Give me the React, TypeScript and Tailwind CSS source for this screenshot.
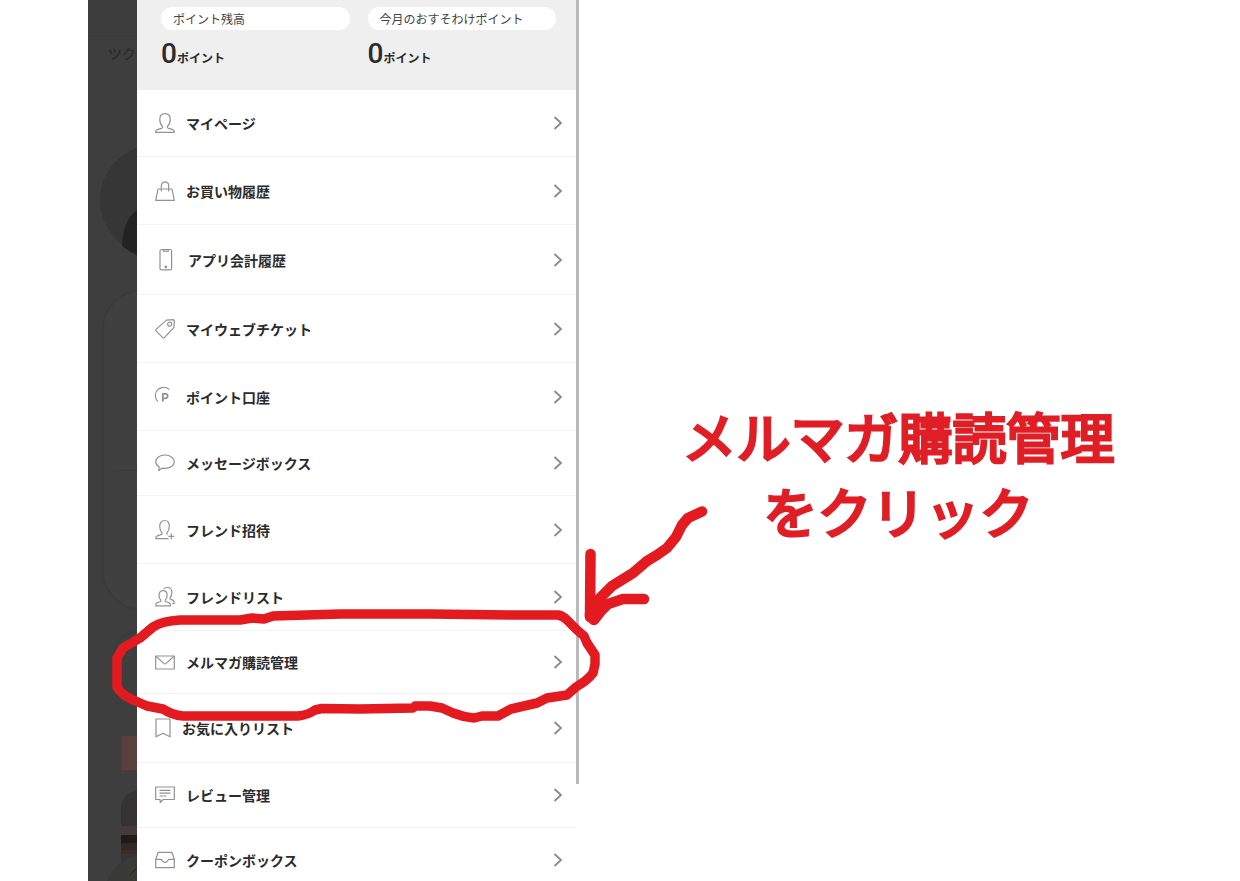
import type { ReactNode } from "react"

interface MenuItem {
  label: string
  icon: ReactNode
  iconClass: string
  viewBox: string
  rowClass: string
}

const menuItems: MenuItem[] = [
  {
    label: "マイページ",
    iconClass: "w-5",
    viewBox: "0 0 20 20",
    rowClass: "h-[67px]",
    icon: (
      <path d="M7.5 13.2C5.6 11.6 4.8 9.2 4.8 6.4C4.8 2.8 6.8 .7 10 .7s5.2 2.1 5.2 5.7c0 2.8-.8 5.2-2.7 6.8c-.4.9 0 1.7 1 2.1l3.7 1.1c1.7.5 2.2 1.3 2.2 3H.6c0-1.7.5-2.5 2.2-3l3.7-1.1c1-.4 1.4-1.2 1-2.1z" />
    ),
  },
  {
    label: "お買い物履歴",
    iconClass: "w-5",
    viewBox: "0 0 20 20",
    rowClass: "h-[68px]",
    icon: (
      <>
        <path d="M3 8h14l2.3 11.3H.7z" />
        <path d="M6.3 10.5V5c0-5.4 7.4-5.4 7.4 0v5.5" />
      </>
    ),
  },
  {
    label: "アプリ会計履歴",
    iconClass: "w-[22px]",
    viewBox: "0 0 22 20",
    rowClass: "h-[70px]",
    icon: (
      <>
        <rect x="5" y="-.5" width="11.6" height="20.4" rx="1.5" />
        <path d="M8.300 0v1.200h5V0" />
        <circle cx="10.800" cy="17" r=".8" />
      </>
    ),
  },
  {
    label: "マイウェブチケット",
    iconClass: "w-5",
    viewBox: "0 0 20 20",
    rowClass: "h-[68px]",
    icon: (
      <>
        <path d="M11.500 1.100l6.600-.4q1.200 0 1.200 1.200l-.4 6.800L9.300 18.700q-.8.6-1.500 0L1 11.900q-.7-.8 0-1.500z" />
        <circle cx="14.700" cy="5.200" r="2" />
      </>
    ),
  },
  {
    label: "ポイント口座",
    iconClass: "w-5",
    viewBox: "0 0 20 20",
    rowClass: "h-[68px]",
    icon: (
      <>
        <path d="M2.900 14.600A8 8 0 0 1 14.200 2.500" />
        <path d="M7.800 14.600V6.800h2.600a2.200 2.200 0 0 1 0 4.500H7.800" strokeWidth="1.800" />
      </>
    ),
  },
  {
    label: "メッセージボックス",
    iconClass: "w-5",
    viewBox: "0 0 20 20",
    rowClass: "h-[65px]",
    icon: (
      <path d="M10 2c5.200 0 9.300 2.900 9.300 6.700S15.200 15.400 10 15.400q-1.500 0-2.800-.3L3.800 17.600l.4-3.900C2 12.500.7 10.700.7 8.700C.7 4.900 4.800 2 10 2z" />
    ),
  },
  {
    label: "フレンド招待",
    iconClass: "w-5",
    viewBox: "0 0 20 20",
    rowClass: "h-[68px]",
    icon: (
      <>
        <path d="M13.500 18.600H.7c0-1.700.5-2.500 2.100-3l3.300-1c1-.3 1.300-1.200.8-2C5.400 11.100 4.700 8.900 4.700 6.300C4.700 2.700 6.700.5 9.500.5s4.800 2.200 4.800 5.800c0 2.600-.7 4.800-2.200 6.300q-.7 1.200.5 1.800" />
        <path d="M16.300 13.500v5.800M13.400 16.400h5.800" />
      </>
    ),
  },
  {
    label: "フレンドリスト",
    iconClass: "w-5",
    viewBox: "0 0 20 20",
    rowClass: "h-[67px]",
    icon: (
      <>
        <path d="M5.700 12.800C4.600 11.700 4 10.200 4 8.200c0-2.800 1.500-4.500 4-4.500s4.100 1.700 4.100 4.500c0 2-.6 3.500-1.700 4.600c-.5.900 0 1.700.8 2l2.600.8c1.200.4 1.700 1.200 1.700 3.200H.7c0-2 .5-2.800 1.700-3.200l2.600-.8c.8-.3 1.200-1.100.7-2z" />
        <path d="M8.500 2.200C9.400 1 10.800.5 12.400.5c2.900 0 4.500 1.900 4.500 4.900c0 2.200-.6 3.900-1.800 5.100c-.5.900 0 1.600.8 1.900l1.900.7c1.100.5 1.500 1.400 1.500 3.400h-2" />
      </>
    ),
  },
  {
    label: "メルマガ購読管理",
    iconClass: "w-5",
    viewBox: "0 0 20 20",
    rowClass: "h-[63px]",
    icon: (
      <>
        <rect x=".7" y="4" width="18.600" height="13" />
        <path d="M1 4.200l7.800 7.200q1.200 1 2.400 0L19 4.200" />
      </>
    ),
  },
  {
    label: "お気に入りリスト",
    iconClass: "w-4",
    viewBox: "0 0 16 20",
    rowClass: "h-[69px]",
    icon: <path d="M1 1h14v17.800l-7-3.600l-7 3.600z" />,
  },
  {
    label: "レビュー管理",
    iconClass: "w-5",
    viewBox: "0 0 20 20",
    rowClass: "h-[65px]",
    icon: (
      <>
        <path d="M.7 2h18.600v12.500H8.200l-3 3v-3H.7z" />
        <path d="M4.500 5.400h11M4.500 8.200h11M4.500 11h7" />
      </>
    ),
  },
  {
    label: "クーポンボックス",
    iconClass: "w-5",
    viewBox: "0 0 20 20",
    rowClass: "h-[65px]",
    icon: (
      <>
        <path d="M3.200 2.300h13.600l2.500 7v8.400H.7V9.300z" />
        <path d="M.7 9.300h5q.9 0 1.200.8q.7 2.200 3.100 2.200t3.100-2.200q.3-.8 1.200-.8h5" />
      </>
    ),
  },
]

const balances = [
  { title: "ポイント残高", value: 0 },
  { title: "今月のおすそわけポイント", value: 0 },
]

function ChevronIcon() {
  return (
    <svg className="h-4 w-3" viewBox="0 0 12 16" fill="none" stroke="#8a8a8a" strokeWidth="1.800" aria-hidden="true">
      <path d="M2.500 2L9 8l-6.500 6" />
    </svg>
  )
}

// Dimmed page that shows beside the open drawer
function DimmedPage() {
  return (
    <div className="relative w-[49px] shrink-0 overflow-hidden bg-[#3e3e3e]">
      <svg className="absolute top-0 left-0" width="49" height="881" viewBox="0 0 49 881" aria-hidden="true">
        <rect width="49" height="36" fill="#3c3c3c" />
        <path d="M0 36.500h49" stroke="#393939" />
        <path d="M6.500 36v845" stroke="#3b3b3b" />
        <circle cx="67" cy="200" r="55" fill="#363636" />
        <path d="M49 210q-14 10-15 36q7 6 15 9z" fill="#232323" />
        <rect x="15" y="291" width="100" height="318" rx="38" fill="#404040" stroke="#3b3b3b" strokeWidth="2" />
        <path d="M24 471.500q12-2 25-1" stroke="#393939" fill="none" />
        <path d="M49 632q-20 1-24 22" stroke="#3b3b3b" strokeWidth="2" fill="none" />
        <rect x="33" y="736" width="16" height="34" fill="#5a403c" />
        <path d="M33 881V808q0-13 16-18v91z" fill="#353334" />
        <path d="M33 826h16v10H33z" fill="#443c3a" />
        <path d="M33 835h16v8H33z" fill="#211a18" />
        <path d="M33 843h16v7H33z" fill="#302a26" />
        <path d="M33 850h16v4H33z" fill="#3b2c26" />
        <path d="M19 881q7-18 30-27v27z" fill="#393935" />
        <path d="M42 875l7-7" stroke="#222" />
      </svg>
      <p className="relative mt-[43px] ml-5 text-[14px] leading-5 font-medium whitespace-nowrap text-[#2b2b2b]">ツク</p>
    </div>
  )
}

function HandDrawnMarks() {
  return (
    <svg
      className="pointer-events-none absolute top-0 left-0"
      width="760"
      height="881"
      viewBox="0 0 760 881"
      fill="none"
      stroke="#e31b20"
      strokeWidth="10.500"
      strokeLinecap="round"
      strokeLinejoin="round"
      aria-hidden="true"
    >
      <path
        strokeWidth="9.500"
        d="M415 706L430 706L442 708L453 713Q463 717 474 718L482 716L498 716L511 709L537 703L547 698L567 695L576 687Q588 680 593 673L595 664V655L587 643L584 636L577 630L567 620Q563 616 558 615H517L430 614H340L273 616L264 619L252 618L240 620H180Q162 621 153 627L140 638L123 648L117 658V687Q121 694 131 699L147 706L163 709Q172 715 183 716H298Q308 715 315 710L322 708.500L360 709L413 708"
      />
      <path d="M702 511.500L688 518L682 525L676 537L667 548L657 555L647 561L633 573L612 586L599 599L590 614" />
      <path d="M590.500 554L590 617" />
      <path d="M644 599H623L608 604L601 611L594 620L590 616" />
    </svg>
  )
}

export default function App() {
  return (
    <div className="relative flex h-screen overflow-hidden bg-white pl-[88px] font-['Noto_Sans_CJK_JP',sans-serif] text-[#2b2b2b]">
      <DimmedPage />

      {/* Drawer */}
      <aside className="w-[439px] shrink-0">
        <div className="grid h-[90px] grid-cols-2 gap-[18px] bg-[#efefef] pt-[7px] pr-5 pl-6">
          {balances.map((balance) => (
            <div key={balance.title}>
              <h2 className="h-[23px] rounded-full bg-white px-3 text-[12px] leading-[23px] whitespace-nowrap text-[#444]">
                {balance.title}
              </h2>
              <p className="mt-2 flex items-baseline leading-8">
                <span className="font-[Roboto,sans-serif] text-[28px] leading-8 font-medium">{balance.value}</span>
                <span className="text-[12px] leading-5 font-bold">ポイント</span>
              </p>
            </div>
          ))}
        </div>

        <nav>
          <ul>
            {menuItems.map((item) => (
              <li key={item.label} className={`${item.rowClass} border-b border-[#f3f3f3]`}>
                <a href="#" className="flex h-full items-center gap-[11px] pr-3 pl-[18px]">
                  <svg
                    className={`${item.iconClass} h-5 shrink-0 overflow-visible`}
                    viewBox={item.viewBox}
                    fill="none"
                    stroke="#929292"
                    strokeWidth="1.200"
                    strokeLinejoin="round"
                    aria-hidden="true"
                  >
                    {item.icon}
                  </svg>
                  <span className="flex-1 text-[14px] leading-5 font-bold">{item.label}</span>
                  <ChevronIcon />
                </a>
              </li>
            ))}
          </ul>
        </nav>
      </aside>

      {/* Scrollbar */}
      <div className="h-[784px] w-[3px] shrink-0 bg-[#bababa]" />

      <main className="flex-1 pt-[398px] pr-[22px]">
        <p className="text-center text-[54px] leading-[75px] font-normal text-[#e01e26] [-webkit-text-stroke:3px_#e01e26] [stroke-linejoin:round]">
          メルマガ購読管理
          <br />
          をクリック
        </p>
      </main>

      <HandDrawnMarks />
    </div>
  )
}
